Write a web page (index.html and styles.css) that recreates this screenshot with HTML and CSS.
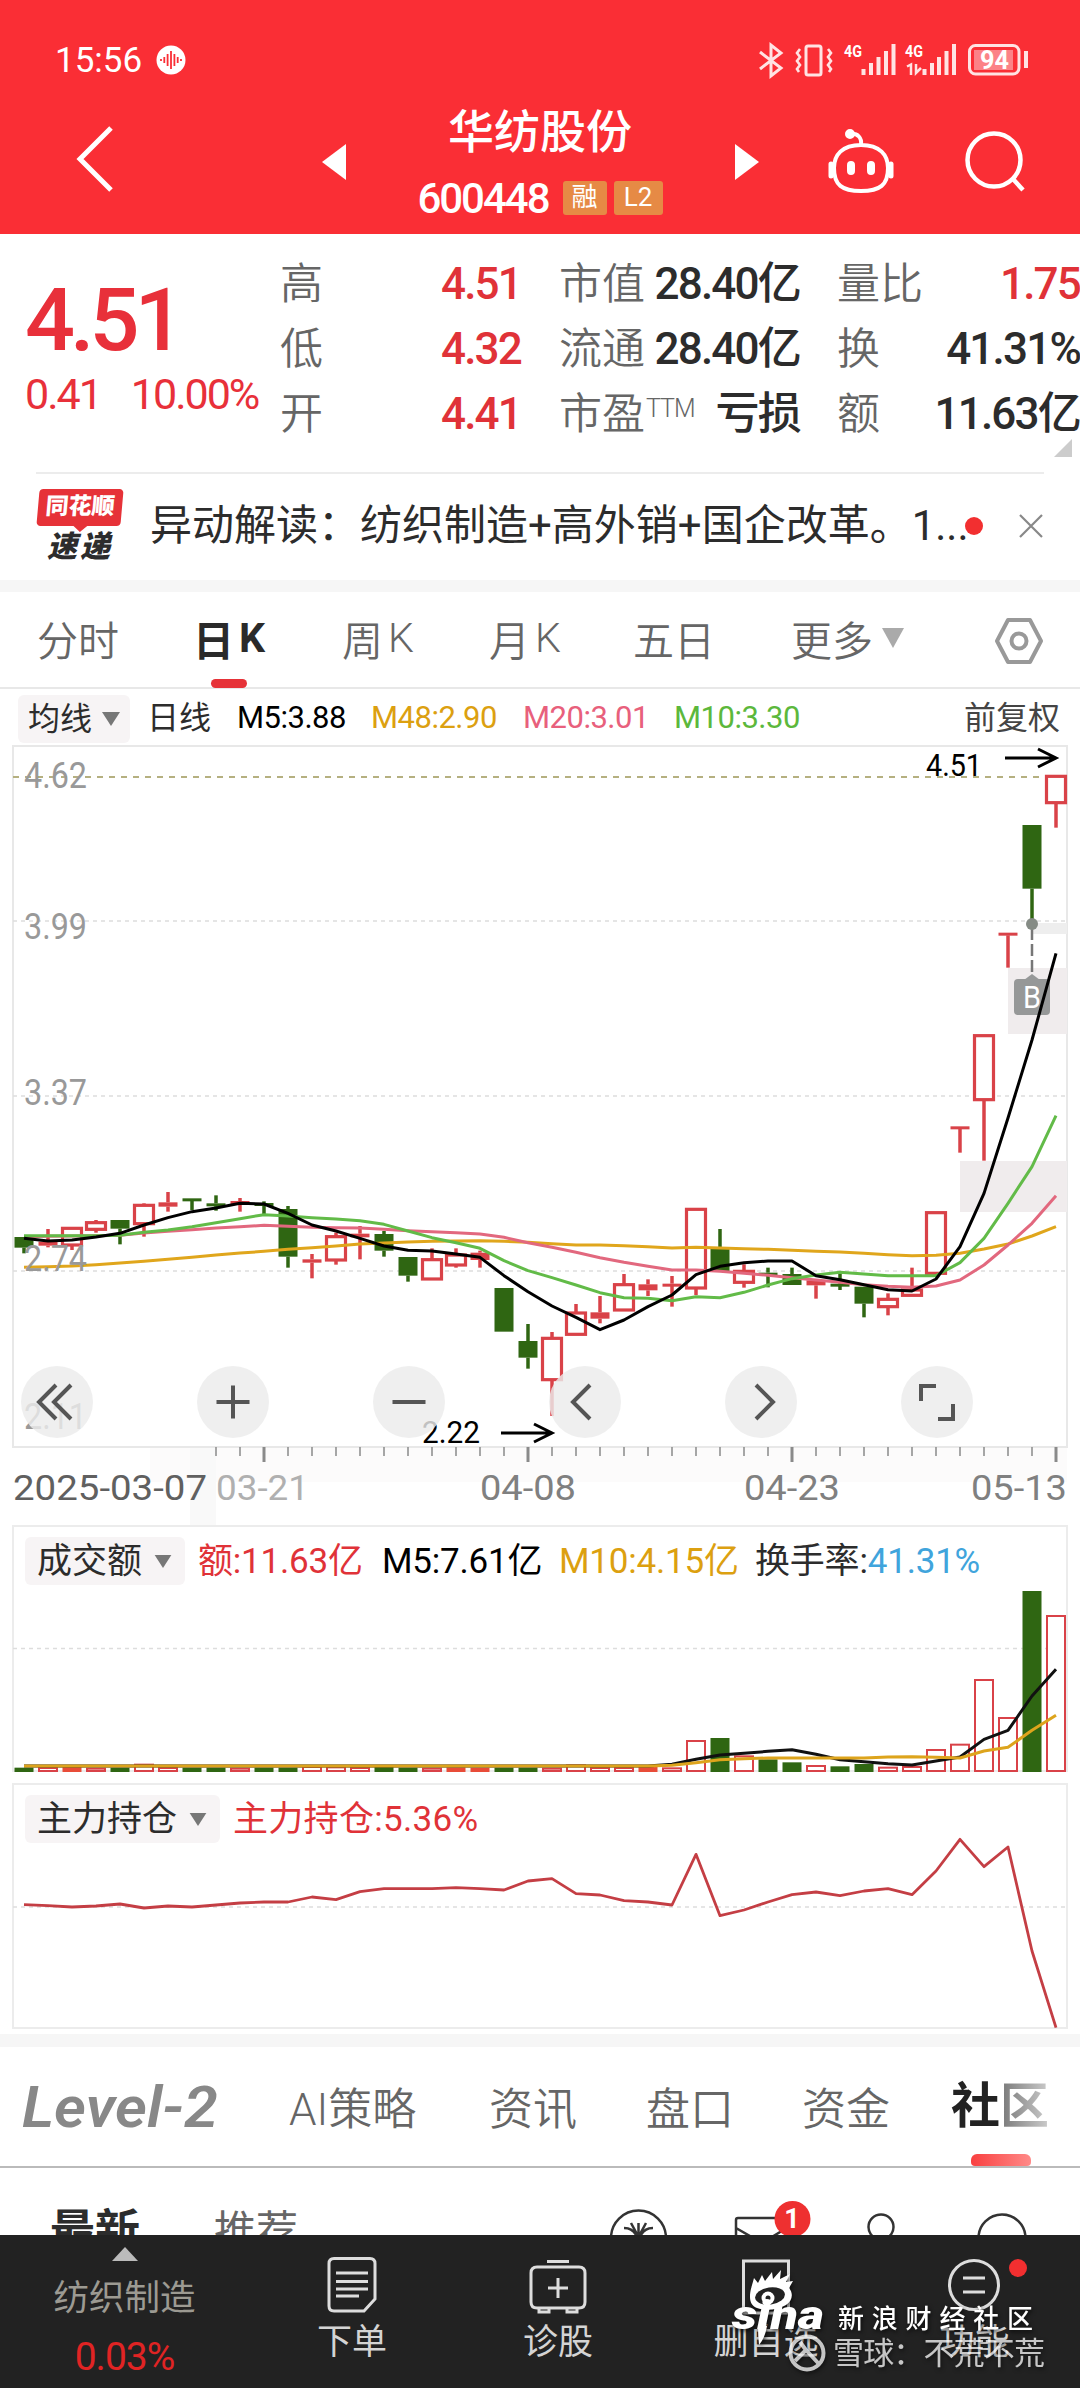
FILE: index.html
```html
<!DOCTYPE html>
<html lang="zh-CN">
<head>
<meta charset="utf-8">
<title>华纺股份 600448</title>
<link rel="stylesheet" href="styles.css">
</head>
<body>
<div class="app">
  <header class="header">
    <div class="status">
      <span class="time">15:56</span>
      <svg class="voice" width="30" height="30" viewBox="0 0 30 30"><circle cx="15" cy="15" r="14.5" fill="#fff"/><path d="M5 14v2M8.3 12v6M11.6 9v12M15 6v18M18.4 9v12M21.7 12v6M25 14v2" stroke="#fa2e35" stroke-width="1.8"/></svg>
      <svg class="signals" width="290" height="44" viewBox="750 38 290 44" fill="none" stroke="#ffe3e3" stroke-width="3">
        <path d="M760 52l21 16-10 8V45l10 8-21 16"/>
        <rect x="806" y="46" width="15" height="29" rx="2"/>
        <path d="M800 49l-3 4 3 4-3 4 3 4-3 4 2 3M828 49l3 4-3 4 3 4-3 4 3 4-2 3" stroke-width="2.6"/>
        <path d="M863.500 75v-6M871 75V63M878.500 75V57M886 75V51M893.500 75V44M924.500 75v-6M932 75V63M939 75V57M946.500 75V51M954 75V44" stroke-width="4"/>
        <path d="M907 66.500l4-2V75M916 64v9l5-5" stroke-width="2.500"/>
        <rect x="969.500" y="45.500" width="49.500" height="28.500" rx="6"/>
        <path d="M1026 51v17" stroke-width="4"/>
        <rect x="974" y="50" width="39" height="20" fill="#fc8287" stroke="none"/>
        <g fill="#fff" stroke="none"><text class="net" x="844" y="57" textLength="18" lengthAdjust="spacingAndGlyphs">4G</text><text class="net" x="905" y="57" textLength="18" lengthAdjust="spacingAndGlyphs">4G</text><text class="battery" x="980" y="69" textLength="29" lengthAdjust="spacingAndGlyphs">94</text></g>
      </svg>
    </div>
    <div class="titlebar">
      <svg width="44" height="68" viewBox="0 0 44 68"><path d="M38 3L7 34l31 31" fill="none" stroke="#fff" stroke-width="5"/></svg>
      <svg width="26" height="38" viewBox="0 0 26 38"><path d="M25 1v36L1 19z" fill="#fff"/></svg>
      <div class="stock">
        <h1>华纺股份</h1>
        <div class="code"><span>600448</span><i>融</i><i class="l2">L2</i></div>
      </div>
      <svg width="26" height="38" viewBox="0 0 26 38"><path d="M1 1v36l24-18z" fill="#fff"/></svg>
      <svg width="72" height="68" viewBox="0 0 72 68" fill="none" stroke="#fff" stroke-width="4"><path d="M35 17c19 0 27 10 27 23 0 17-8 23-27 23S8 57 8 40c0-13 8-23 27-23zM24 6c8-1 12 4 11 11"/><circle cx="24" cy="6" r="3" fill="#fff"/><path d="M5 36v12M65 36v12" stroke-width="5" stroke-linecap="round"/><path d="M25 37v6M45 37v6" stroke-width="8" stroke-linecap="round"/></svg>
      <svg width="64" height="64" viewBox="0 0 64 64" fill="none" stroke="#fff" stroke-width="4.500"><circle cx="30" cy="30" r="26.500"/><path d="M49 49l10 11"/></svg>
    </div>
  </header>

  <section class="quote">
    <div class="price">
      <strong>4.51</strong>
      <div><span>0.41</span><span>10.00%</span></div>
    </div>
    <dl>
      <dt>高</dt><dd class="up">4.51</dd><dt>市值</dt><dd>28.40亿</dd><dt>量比</dt><dd class="up">1.75</dd>
      <dt>低</dt><dd class="up">4.32</dd><dt>流通</dt><dd>28.40亿</dd><dt>换</dt><dd>41.31%</dd>
      <dt>开</dt><dd class="up">4.41</dd><dt>市盈<sup>TTM</sup></dt><dd>亏损</dd><dt>额</dt><dd>11.63亿</dd>
    </dl>
    <svg class="corner" width="18" height="18" viewBox="0 0 18 18"><path d="M18 0v18H0z" fill="#ccc"/></svg>
  </section>

  <section class="notice">
    <div class="brand"><span class="brand-top">同花顺</span><span class="brand-sub">速递</span></div>
    <p>异动解读：纺织制造+高外销+国企改革。1...</p>
    <span class="dot"></span>
    <svg width="26" height="26" viewBox="0 0 26 26"><path d="M2 2l22 22M24 2L2 24" stroke="#888" stroke-width="2.200"/></svg>
  </section>

  <nav class="periods">
    <span>分时</span><span class="active">日<b>K</b></span><span>周<b>K</b></span><span>月<b>K</b></span><span>五日</span><span>更多<svg width="22" height="20" viewBox="0 0 22 20"><path d="M0 0h22L11 20z" fill="#aaa"/></svg></span>
    <svg class="gear" width="50" height="48" viewBox="0 0 50 48" fill="none" stroke="#999" stroke-width="4"><path d="M14 3h22l11 21-11 21H14L3 24z" stroke-linejoin="round"/><circle cx="25" cy="24" r="7.500"/></svg>
  </nav>

  <div class="averages">
    <span class="chip">均线<svg width="18" height="14" viewBox="0 0 18 14"><path d="M0 0h18L9 14z"/></svg></span>
    <span class="dark">日线</span><span class="c-m5">M5:3.88</span><span class="c-m48">M48:2.90</span><span class="c-m20">M20:3.01</span><span class="c-m10">M10:3.30</span><span class="adjust">前复权</span>
  </div>

  <section class="kline">
    <svg id="kline" width="1080" height="781" viewBox="0 745 1080 781"></svg>
    <div class="tools">
      <button aria-label="历史"><svg viewBox="0 0 72 72"><path d="M35 19L18 36l17 17M50 19L33 36l17 17"/></svg></button>
      <button aria-label="放大"><svg viewBox="0 0 72 72"><path d="M36 19.500v33M19.500 36h33"/></svg></button>
      <button aria-label="缩小"><svg viewBox="0 0 72 72"><path d="M19.500 36h33"/></svg></button>
      <button aria-label="向左"><svg viewBox="0 0 72 72"><path d="M41 19L24 36l17 17"/></svg></button>
      <button aria-label="向右"><svg viewBox="0 0 72 72"><path d="M31 19l17 17-17 17"/></svg></button>
      <button aria-label="全屏"><svg viewBox="0 0 72 72"><path d="M20 35V20h15M37 53h15V38"/></svg></button>
    </div>
  </section>

  <section class="panel volume">
    <div class="legend"><span class="chip">成交额<svg width="18" height="13" viewBox="0 0 18 14"><path d="M0 0h18L9 14z"/></svg></span><span class="up">额:11.63亿</span><span class="c-m5">M5:7.61亿</span><span class="c-m48">M10:4.15亿</span><span class="dark">换手率:<em>41.31%</em></span></div>
    <svg id="volume" width="1056" height="188" viewBox="12 1584 1056 188"></svg>
  </section>

  <section class="panel holding">
    <div class="legend"><span class="chip">主力持仓<svg width="18" height="13" viewBox="0 0 18 14"><path d="M0 0h18L9 14z"/></svg></span><span class="up">主力持仓:5.36%</span></div>
    <svg id="holding" width="1056" height="185" viewBox="12 1843 1056 185"></svg>
  </section>

  <nav class="sections">
    <svg width="210" height="76" viewBox="0 0 210 76"><text class="level" x="2" y="58" textLength="196" lengthAdjust="spacingAndGlyphs">Level-2</text></svg>
    <span>AI策略</span><span>资讯</span><span>盘口</span><span>资金</span><span class="active">社区</span>
  </nav>

  <section class="feed">
    <b>最新</b><span>推荐</span>
    <svg class="feed-icons" width="460" height="35" viewBox="600 2200 460 35" fill="none" stroke="#333" stroke-width="2.500">
      <circle cx="638.500" cy="2238" r="27.500"/><path d="M638.500 2223v14M631 2223l7 13M646 2223l-7 13M624 2228c7 0 11 4 13 9M653 2228c-7 0-11 4-13 9"/>
      <path d="M736 2240v-20q0-2 2-2h50M736 2228l26 15 28-17"/>
      <circle cx="881" cy="2227" r="12.500"/><circle cx="1002" cy="2238" r="23.500"/>
      <circle cx="792.500" cy="2219" r="18" fill="#ee3030" stroke="none"/><text class="badge" x="792" y="2228" text-anchor="middle">1</text>
    </svg>
  </section>

  <footer class="dock">
    <div class="sector"><svg width="26" height="14" viewBox="0 0 26 14"><path d="M13 0l13 14H0z" fill="#bbb"/></svg><span>纺织制造</span><em>0.03%</em></div>
    <div class="item"><svg width="60" height="60" viewBox="0 0 60 60"><path d="M12 3.500h36q5 0 5 5V44L42 56H12q-5 0-5-5V8.500q0-5 5-5zM14 18h32M14 26.500h32M14 34h32M14 41h23"/></svg><span>下单</span></div>
    <div class="item"><svg width="60" height="60" viewBox="0 0 60 60"><path d="M19 6.500h22M9 12h42q6 0 6 6v29q0 6-6 6H9q-6 0-6-6V18q0-6 6-6zM30 23v20M20 33h20M11 53v4h10v-4M39 53v4h10v-4"/></svg><span>诊股</span></div>
    <div class="item"><svg width="60" height="60" viewBox="0 0 60 60"><path d="M7.500 6h45v52h-45z"/></svg><span>删自选</span></div>
    <div class="item"><svg width="60" height="60" viewBox="0 0 60 60"><circle cx="29" cy="30" r="24.500"/><path d="M18 23h22M18 37h22"/></svg><span>功能</span><i class="dot"></i></div>
    <svg class="watermark" width="380" height="120" viewBox="700 2268 380 120">
      <path d="M750 2297c0-7 2-11 4-19l4 5 4-8 3 6 7-9 1 7 8-9-1 9 10-5-4 8 7-1-4 7c5 6 3 13-3 17-8 5-21 6-29 3-5-2-7-6-7-11z" fill="#fff"/>
      <ellipse cx="770" cy="2296" rx="15" ry="8.500" fill="#222" transform="rotate(-8 770 2296)"/><circle cx="768" cy="2298" r="6.500" fill="#fff"/><circle cx="768" cy="2298" r="2.500" fill="#222"/>
      <text class="sina" x="732" y="2329" textLength="92" lengthAdjust="spacingAndGlyphs">sina</text>
      <path d="M758 2326h9q-2 12-8 19-1-9-1-19z" fill="#fff"/>
      <text class="wm-a" x="838" y="2328" textLength="195">新浪财经社区</text>
      <g opacity=".75"><circle cx="807" cy="2353" r="16.500" fill="none" stroke="#fff" stroke-width="4"/><path d="M795 2361l11-11-6-8M806 2350l13 14" fill="none" stroke="#fff" stroke-width="4"/><text class="wm-b" x="833" y="2364" textLength="212">雪球：不荒不荒</text></g>
    </svg>
  </footer>
</div>
<script src="chart.js"></script>
</body>
</html>
```

FILE: styles.css
```css
* { box-sizing: border-box; }
body { margin: 0; background: #fff; font-family: Roboto, "Noto Sans CJK SC", sans-serif; color: #2c2c2c; }
svg { display: block; flex: none; }
i, em { font-style: normal; }
.app { width: 1080px; height: 2388px; overflow: hidden; display: flex; flex-direction: column; }
.app > * { flex: none; }
.up { color: #e03238; }
.dark { color: #2c2c2c; }
.c-m5 { color: #000; }
.c-m48 { color: #dca010; }
.c-m20 { color: #e8607c; }
.c-m10 { color: #5cb83c; }

.header { height: 234px; background: #fa2e35; color: #fff; padding-top: 38px; }
.status { display: flex; align-items: center; height: 44px; padding: 0 40px 0 55px; }
.time { font-size: 35px; width: 101px; }
.signals { margin-left: auto; }
.net { font: 700 17px Roboto, sans-serif; }
.battery { font: 700 25px Roboto, sans-serif; }
.titlebar { display: grid; grid-template-columns: 248px 64px 325px 82px 130px 1fr; padding: 18px 0 0 73px; align-items: start; }
.titlebar > svg { margin-top: 28px; }
.titlebar > svg:nth-child(1) { margin-top: 25px; }
.titlebar > svg:nth-child(2), .titlebar > svg:nth-child(4) { margin-top: 43px; }
.titlebar > svg:nth-child(4) { margin-left: 24px; }
.titlebar > svg:nth-child(5) { margin-left: 34px; }
.titlebar > svg:nth-child(6) { margin-left: 42px; margin-top: 30px; }
.stock { width: 310px; text-align: center; }
.stock h1 { margin: 0; font-size: 46px; font-weight: 500; line-height: 64px; }
.code { display: flex; align-items: center; justify-content: center; margin-top: 15px; height: 38px; font-size: 42px; font-weight: 500; letter-spacing: -2px; }
.code i { width: 44px; height: 34px; margin-left: 14px; border-radius: 3px; background: #e68a45; font-size: 26px; line-height: 33px; font-weight: 400; letter-spacing: 0; }
.code .l2 { width: 49px; margin-left: 7px; }

.quote { height: 238px; display: flex; position: relative; padding-left: 25px; }
.price { width: 255px; color: #e8303a; }
.price strong { display: block; margin-top: 36px; height: 100px; font-size: 88px; line-height: 100px; font-weight: 500; letter-spacing: -5px; }
.price div { display: flex; gap: 30px; margin-top: -3px; font-size: 43px; line-height: 54px; letter-spacing: -2px; white-space: nowrap; }
.quote dl { margin: 17px 0 0; width: 800px; display: grid; grid-template-columns: 90px 151px 129px 150px 130px 150px; grid-template-rows: repeat(3, 65px); align-items: center; }
.quote dt { color: #666; font-size: 43px; white-space: nowrap; line-height: 60px; font-weight: 350; }
.quote dt:nth-of-type(3n+2) { margin-left: 38px; }
.quote dt:nth-of-type(3n) { margin-left: 37px; }
.quote dd { margin: 0; text-align: right; font-size: 44px; line-height: 60px; font-weight: 480; letter-spacing: -1.8px; white-space: nowrap; justify-self: end; }
.quote sup { font-size: 25px; font-weight: 300; vertical-align: 12px; line-height: 0; margin-left: 1px; letter-spacing: -1px; }
.corner { position: absolute; right: 8px; bottom: 15px; }

.notice { height: 120px; border-bottom: 12px solid #f6f6f6; padding: 0 36px; display: flex; align-items: center; position: relative; }
.notice::before { content: ""; position: absolute; left: 36px; right: 36px; top: 0; height: 2px; background: #ececec; }
.brand { width: 88px; margin-right: 26px; display: flex; flex-direction: column; align-items: center; font-style: italic; font-weight: 900; }
.brand-top { width: 84px; height: 37px; background: #e63238; border-radius: 4px; transform: skewX(-5deg); color: #fff; font-size: 23px; line-height: 36px; text-align: center; font-style: normal; position: relative; }
.brand-top::after { content: ""; position: absolute; left: 36px; top: 36px; border: 8px solid transparent; border-top: 7px solid #e63238; border-bottom: 0; }
.brand-sub { font-size: 30px; line-height: 34px; letter-spacing: 3px; margin-top: 4px; }
.notice p { margin: 0; font-size: 42px; line-height: 60px; white-space: nowrap; width: 815px; }
.dot { width: 18px; height: 18px; border-radius: 50%; background: #f22f30; }
.notice > svg { margin-left: auto; }

.periods { height: 97px; border-bottom: 2px solid #e8e8e8; display: grid; grid-template-columns: 156px 149px 147px 144px 158px 203px 1fr; padding-left: 37px; align-items: center; font-size: 41px; color: #666; }
.periods > span { display: flex; align-items: center; height: 97px; padding-bottom: 5px; position: relative; font-weight: 350; }
.periods b { font-weight: inherit; margin-left: 5px; }
.periods span svg { margin-left: 9px; }
.periods .active { color: #2a2a2a; font-weight: 700; }
.periods .active::after { content: ""; position: absolute; left: 18px; bottom: 1px; width: 36px; height: 9px; border-radius: 5px; background: #e63238; }

.averages { height: 56px; display: flex; align-items: center; padding: 4px 20px 0 18px; font-size: 32px; white-space: nowrap; }
.chip { display: flex; align-items: center; background: #f7f4f5; border-radius: 6px; color: #2c2c2c; }
.chip svg { fill: #777; }
.averages > span { height: 48px; line-height: 46px; }
.averages .chip { width: 112px; padding: 0 0 1px 10px; gap: 10px; margin-right: 17px; }
.averages .dark { width: 90px; }
.averages [class^="c-"] { font-size: 31px; letter-spacing: -.5px; }
.c-m5 { width: 134px; }
.averages .c-m48 { width: 152px; }
.averages .c-m20 { width: 151px; }
.averages .adjust { margin-left: auto; color: #444; }

.kline { height: 780px; position: relative; }
.tools { position: absolute; left: 21px; top: 621px; display: flex; gap: 104px; }
.tools button { width: 72px; height: 72px; padding: 0; border: 0; border-radius: 50%; background: rgba(235, 235, 235, .82); }
.tools path { fill: none; stroke: #555; stroke-width: 4; }
.axis, .date { font-family: Roboto, sans-serif; font-size: 36px; fill: #999; }
.date { font-size: 35px; fill: #808080; }
.extreme { font: 32px Roboto, sans-serif; fill: #000; }
.mark { font: 31px Roboto, sans-serif; fill: #fff; }

.panel { margin: 0 12px; border: 2px solid #ececec; display: flex; flex-direction: column; justify-content: space-between; }
.panel > svg { margin: 0 0 -2px -2px; }
.volume { height: 247px; }
.holding { height: 246px; margin-top: 11px; }
.legend { display: flex; align-items: center; height: 48px; margin: 10px 0 0 11px; font-size: 35px; line-height: 49px; letter-spacing: -.2px; white-space: nowrap; }
.legend > span { height: 48px; }
.legend .chip { padding: 0 13px 0 12px; gap: 12px; margin-right: 13px; letter-spacing: 0; }
.volume .up { width: 184px; }
.legend .c-m5 { width: 177px; }
.legend .c-m48 { width: 196px; }
.legend em { color: #40a4dc; }
.holding .legend { letter-spacing: .3px; }

.sections { height: 134px; margin-top: 5px; border-top: 13px solid #f6f6f6; border-bottom: 2px solid #bbb; display: grid; grid-template-columns: 269px 200px 157px 156px 149px 1fr; padding-left: 20px; align-items: center; font-size: 44px; color: #666; }
.sections span { font-weight: 350; white-space: nowrap; padding-bottom: 2px; }
.level { font: italic 600 58px Roboto, sans-serif; fill: #888; }
.sections .active { position: relative; align-self: stretch; line-height: 119px; padding: 0; font-size: 49px; font-weight: 700; background: linear-gradient(90deg, #222 0 48px, #777 49px, #ccc 98px); -webkit-background-clip: text; background-clip: text; color: transparent; }
.sections .active::after { content: ""; position: absolute; left: 20px; bottom: 0; width: 60px; height: 12px; border-radius: 6px 6px 4px 4px; background: linear-gradient(90deg, #f94040, #ff8a88); }

.feed { height: 67px; overflow: hidden; display: flex; padding: 31px 20px 0 50px; font-size: 45px; line-height: 66px; position: relative; }
.feed b { width: 164px; }
.feed span { font-size: 42px; color: #666; width: 386px; }
.feed-icons { margin-top: 1px; }
.badge { font: 700 27px Roboto, sans-serif; fill: #fff; stroke: none; }

.dock { height: 153px; background: #222; position: relative; display: grid; grid-template-columns: 249px 206px 206px 210px 207px; color: #d4d4d4; }
.sector { display: flex; flex-direction: column; align-items: center; padding-top: 12px; }
.sector span { font-size: 35.500px; line-height: 50px; margin-top: 12px; color: #9c9a92; }
.sector em { font-size: 39px; line-height: 44px; margin-top: 12px; color: #e02424; letter-spacing: -1px; }
.item { display: flex; flex-direction: column; align-items: center; padding-top: 20px; position: relative; font-size: 35px; line-height: 46px; }
.item path, .item circle { fill: none; stroke: #ddd; stroke-width: 3; }
.item span { margin-top: 5px; }
.item .dot { position: absolute; left: 138px; top: 24px; }
.watermark { position: absolute; left: 700px; top: 33px; filter: drop-shadow(1px 2px 2px rgba(0, 0, 0, .7)); }
.sina { font: italic 900 41px Roboto, sans-serif; fill: #fff; }
.wm-a { font: 500 26px "Noto Sans CJK SC", sans-serif; fill: #fff; }
.wm-b { font: 31px "Noto Sans CJK SC", sans-serif; fill: #fff; }
```

FILE: chart.js
```js
const RED = '#d94248', GREEN = '#2f6612';
const X = i => 24 + i * 24;
const rect = (x, y, w, h, attrs) => `<rect x="${x}" y="${y}" width="${w}" height="${h}" ${attrs}/>`;
const seg = (x1, y1, x2, y2, attrs) => `<path d="M${x1} ${y1}L${x2} ${y2}" fill="none" ${attrs}/>`;
const line = (ys, color, base, w) =>
  `<polyline points="${ys.map((v, i) => X(i) + ',' + (base + v / 3)).join(' ')}" fill="none" stroke="${color}" stroke-width="${w}" stroke-linejoin="round"/>`;
const label = (x, y, w, cls, str, attrs = '') =>
  `<text class="${cls}" x="${x}" y="${y}" textLength="${w}" lengthAdjust="spacingAndGlyphs" ${attrs}>${str}</text>`;

// kind, body top, body bottom, wick top, wick bottom (thirds of a pixel below y = 1130)
const candles = [
  ['g',321,353,321,370],['f',335,347,297,352],['h',295,345,295,360],['h',278,298,270,308],['g',270,296,270,343],
  ['h',226,281,220,320],['f',217,230,186,245],['g',205,212,205,240],['g',220,227,196,242],['f',213,220,204,245],
  ['g',219,224,214,252],['g',237,380,228,413],['f',388,398,372,445],['h',320,390,308,404],['f',311,322,288,388],
  ['g',312,362,303,380],['g',381,437,381,455],['h',389,447,355,447],['h',375,405,355,413],['f',368,390,362,413],
  ['g',474,605,474,605],['g',633,683,582,716],['h',625,749,606,858],['h',549,613,522,613],['f',547,566,498,580],
  ['h',464,540,432,540],['f',463,481,448,498],['f',461,467,438,530],['h',238,474,238,495],['g',356,423,297,423],
  ['h',424,457,403,473],['g',428,434,413,472],['g',432,465,413,465],['f',451,466,451,506],['g',461,466,432,480],
  ['g',470,521,470,562],['h',508,530,490,556],['h',480,496,413,496],['h',248,430,248,430],['f',-11,-3,-11,68],
  ['h',-283,-91,-283,92],['f',-592,-584,-592,-487],['g',-915,-724,-915,-625],['h',-1061,-982,-1061,-907]
];
const m5 = [325,333,330,321,310,285,263,245,234,220,222,250,285,303,325,348,361,363,372,382,437,485,528,562,599,570,530,495,434,409,398,393,393,437,449,464,479,483,447,350,190,-36,-270,-530];
const m10 = [317,317,317,317,316,307,300,290,278,266,254,258,263,267,272,283,303,323,338,355,392,422,443,465,488,503,505,512,500,503,487,465,446,435,427,432,437,437,437,398,325,220,110,-43];
const m20 = [320,319,318,317,316,309,304,299,294,290,286,289,292,293,294,298,302,305,308,312,322,338,352,367,383,397,409,420,420,424,430,436,443,450,457,464,469,472,468,450,405,345,280,197];
const m48 = [412,410,408,404,399,394,388,382,375,369,364,358,353,348,342,339,336,334,333,332,334,337,341,345,345,347,350,354,352,354,356,358,361,364,366,370,374,377,376,370,357,342,318,290];

let k = rect(150, 1448, 917, 34, 'fill="#fcfbfb"') + rect(190, 1448, 26, 77, 'fill="#f9f9f9"');
k += rect(13, 746, 1054, 701, 'fill="none" stroke="#e8e8e8" stroke-width="2"');
k += rect(960, 1161, 107, 51, 'fill="#f0eced"') + rect(1008, 968, 59, 66, 'fill="#f0eced"') + rect(1032, 923, 35, 11, 'fill="#eee"');
k += seg(13, 777, 1046, 777, 'stroke="#b5b080" stroke-width="2" stroke-dasharray="6 6"');
for (const y of [921, 1096, 1271]) k += seg(13, y, 1066, y, 'stroke="#ddd" stroke-width="1.3" stroke-dasharray="4 4"');

candles.forEach(([t, a, b, c, d], i) => {
  const x = X(i), y = v => 1130 + v / 3, col = t === 'g' ? GREEN : RED;
  const sw = `stroke="${col}" stroke-width="3.500"`;
  if (c < a) k += seg(x, y(c), x, y(a), sw);
  if (d > b) k += seg(x, y(b), x, y(d), sw);
  if (t === 'h') k += rect(x - 9.5, y(a), 19, y(b) - y(a), `fill="#fff" stroke="${col}" stroke-width="3.200"`);
  else k += rect(x - 9.5, y(a), 19, Math.max(3, y(b) - y(a)), `fill="${col}"`);
});
k += rect(1014, 979, 36, 36, 'rx="4" fill="#969898"') + '<path d="M1024 980l8-6 8 6z" fill="#969898"/>';
k += label(1023, 1008, 18, 'mark', 'B');
k += seg(1032, 928, 1032, 975, 'stroke="#777" stroke-width="2.500" stroke-dasharray="12 4"') + '<circle cx="1032" cy="924" r="6" fill="#858b85"/>';
k += line(m48, '#e0a61c', 1130, 3) + line(m20, '#e2687e', 1130, 3) + line(m10, '#62bb48', 1130, 3) + line(m5, '#000', 1130, 3);

[['4.62', 788], ['3.99', 939], ['3.37', 1105], ['2.74', 1271], ['2.11', 1429]].forEach(([s, y]) => k += label(24, y, 63, 'axis', s));
for (let i = 8; i < 44; i++) {
  const major = (i - 10) % 11 === 0;
  k += seg(X(i), 1447, X(i), major ? 1462 : 1456, `stroke="#8a8a8a" stroke-width="${major ? 3 : 1.5}"`);
}
k += label(13, 1500, 194, 'date', '2025-03-07', 'style="fill:#606060"');
k += label(216, 1500, 93, 'date', '03-21', 'style="fill:#b0b0b0"');
k += label(480, 1500, 96, 'date', '04-08') + label(744, 1500, 96, 'date', '04-23') + label(971, 1500, 96, 'date', '05-13');
k += label(926, 776, 56, 'extreme', '4.51') + label(422, 1443, 58, 'extreme', '2.22');
k += '<path d="M1005 758h50M1038 749l18 9-18 9M501 1433h50M534 1424l18 9-18 9" fill="none" stroke="#000" stroke-width="3"/>';
document.getElementById('kline').innerHTML = k;

// turnover: kind and bar top (thirds of a pixel below y = 1520)
const bars = 'g740 h738 f738 h740 g740 h728 h738 g740 g740 h740 g740 g740 h735 h736 h738 g738 g740 h740 f739 f740 g740 g740 h740 h730 h738 h738 f738 h739 h657 g651 h703 g715 g724 h732 g736 g729 h737 h735 h684 h668 h474 h588 g210 h282'.split(' ');
const v5 = [...Array(27).fill(735),730,715,702,697,691,686,700,716,722,728,732,720,708,655,628,525,445];
const v10 = [...Array(27).fill(735),733,725,716,713,711,711,711,711,711,708,707,709,711,690,679,628,583];
let v = seg(13, 1647.5, 1066, 1647.5, 'stroke="#ddd" stroke-width="1.500" stroke-dasharray="4 4"');
bars.forEach((s, i) => {
  const y = 1520 + s.slice(1) / 3, h = 1771 - y, x = X(i);
  v += s[0] === 'h' ? rect(x - 9, y + 1, 18, h - 2, `fill="#fff" stroke="${RED}" stroke-width="2"`)
    : rect(x - 9.5, y, 19, h, `fill="${s[0] === 'g' ? GREEN : '#e84c38'}"`);
});
v += line(v5, '#111', 1520, 3) + line(v10, '#dda41c', 1520, 3);
document.getElementById('volume').innerHTML = v;

const hold = [401,404,408,405,399,411,405,408,402,396,393,393,378,386,362,353,353,353,350,353,357,330,323,368,372,389,393,402,250,434,417,393,371,363,374,360,353,371,300,205,287,228,540,770];
const holding = document.getElementById('holding');
holding.style.overflow = 'visible';
holding.innerHTML =
  seg(13, 1906, 1066, 1906, 'stroke="#ddd" stroke-width="1.300" stroke-dasharray="4 4"') + line(hold, '#c43e44', 1770, 2.8);
```
